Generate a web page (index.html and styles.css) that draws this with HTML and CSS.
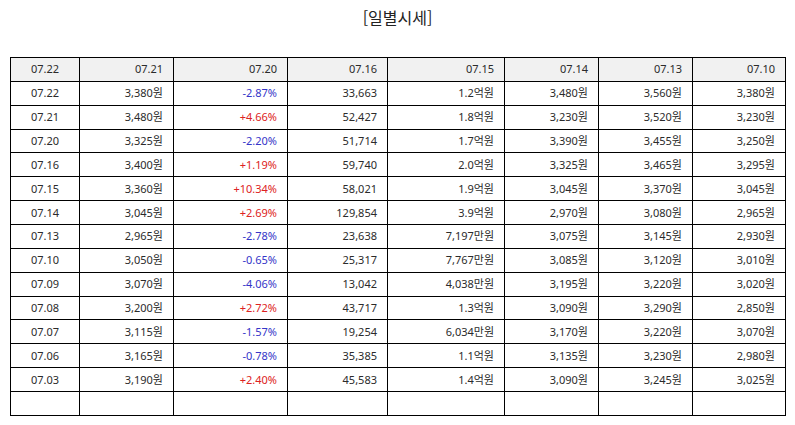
FILE: index.html
```html
<!DOCTYPE html>
<html lang="ko">
<head>
<meta charset="utf-8">
<title>일별시세</title>
<link rel="stylesheet" href="styles.css">
</head>
<body>
<h1 class="title">[일별시세]</h1>
<table class="grid">
  <colgroup>
    <col class="c1"><col class="c2"><col class="c3"><col class="c4"><col class="c5"><col class="c6"><col class="c7"><col class="c8">
  </colgroup>
  <thead>
    <tr><th class="ctr">07.22</th><th>07.21</th><th>07.20</th><th>07.16</th><th>07.15</th><th>07.14</th><th>07.13</th><th>07.10</th></tr>
  </thead>
  <tbody>
    <tr><td class="ctr">07.22</td><td>3,380원</td><td class="dn">-2.87%</td><td>33,663</td><td>1.2억원</td><td>3,480원</td><td>3,560원</td><td>3,380원</td></tr>
    <tr><td class="ctr">07.21</td><td>3,480원</td><td class="up">+4.66%</td><td>52,427</td><td>1.8억원</td><td>3,230원</td><td>3,520원</td><td>3,230원</td></tr>
    <tr><td class="ctr">07.20</td><td>3,325원</td><td class="dn">-2.20%</td><td>51,714</td><td>1.7억원</td><td>3,390원</td><td>3,455원</td><td>3,250원</td></tr>
    <tr><td class="ctr">07.16</td><td>3,400원</td><td class="up">+1.19%</td><td>59,740</td><td>2.0억원</td><td>3,325원</td><td>3,465원</td><td>3,295원</td></tr>
    <tr><td class="ctr">07.15</td><td>3,360원</td><td class="up">+10.34%</td><td>58,021</td><td>1.9억원</td><td>3,045원</td><td>3,370원</td><td>3,045원</td></tr>
    <tr><td class="ctr">07.14</td><td>3,045원</td><td class="up">+2.69%</td><td>129,854</td><td>3.9억원</td><td>2,970원</td><td>3,080원</td><td>2,965원</td></tr>
    <tr><td class="ctr">07.13</td><td>2,965원</td><td class="dn">-2.78%</td><td>23,638</td><td>7,197만원</td><td>3,075원</td><td>3,145원</td><td>2,930원</td></tr>
    <tr><td class="ctr">07.10</td><td>3,050원</td><td class="dn">-0.65%</td><td>25,317</td><td>7,767만원</td><td>3,085원</td><td>3,120원</td><td>3,010원</td></tr>
    <tr><td class="ctr">07.09</td><td>3,070원</td><td class="dn">-4.06%</td><td>13,042</td><td>4,038만원</td><td>3,195원</td><td>3,220원</td><td>3,020원</td></tr>
    <tr><td class="ctr">07.08</td><td>3,200원</td><td class="up">+2.72%</td><td>43,717</td><td>1.3억원</td><td>3,090원</td><td>3,290원</td><td>2,850원</td></tr>
    <tr><td class="ctr">07.07</td><td>3,115원</td><td class="dn">-1.57%</td><td>19,254</td><td>6,034만원</td><td>3,170원</td><td>3,220원</td><td>3,070원</td></tr>
    <tr><td class="ctr">07.06</td><td>3,165원</td><td class="dn">-0.78%</td><td>35,385</td><td>1.1억원</td><td>3,135원</td><td>3,230원</td><td>2,980원</td></tr>
    <tr><td class="ctr">07.03</td><td>3,190원</td><td class="up">+2.40%</td><td>45,583</td><td>1.4억원</td><td>3,090원</td><td>3,245원</td><td>3,025원</td></tr>
    <tr><td></td><td></td><td></td><td></td><td></td><td></td><td></td><td></td></tr>
  </tbody>
</table>
</body>
</html>
```
FILE: styles.css
```css
html, body {
  margin: 0;
  padding: 0;
  background: #ffffff;
}
body {
  padding: 0 10px;
  font-family: "Noto Sans", "Noto Sans CJK KR", sans-serif;
  color: #2b2b2b;
}
.title {
  margin: 0;
  padding-top: 5px;
  height: 57px;
  box-sizing: border-box;
  text-align: center;
  font-family: "Noto Sans CJK KR", sans-serif;
  font-weight: 400;
  font-size: 16px;
  line-height: 24px;
  color: #222222;
}
.grid {
  width: 775px;
  border-collapse: collapse;
  table-layout: fixed;
  font-size: 11px;
}
.c1 { width: 69px; }
.c2 { width: 94px; }
.c3 { width: 114px; }
.c4 { width: 100px; }
.c5 { width: 117px; }
.c6 { width: 94px; }
.c7 { width: 94px; }
.c8 { width: 93px; }
.grid tr {
  height: 23.87px;
}
.grid th,
.grid td {
  border: 1px solid #000000;
  padding: 0 10px 0 0;
  text-align: right;
  font-weight: 400;
  line-height: 14px;
  white-space: nowrap;
}
.grid th {
  background: #f1f1f1;
}
.grid .ctr {
  text-align: center;
  padding: 0;
}
.grid .up { color: #dd2222; }
.grid .dn { color: #3535c8; }
```
